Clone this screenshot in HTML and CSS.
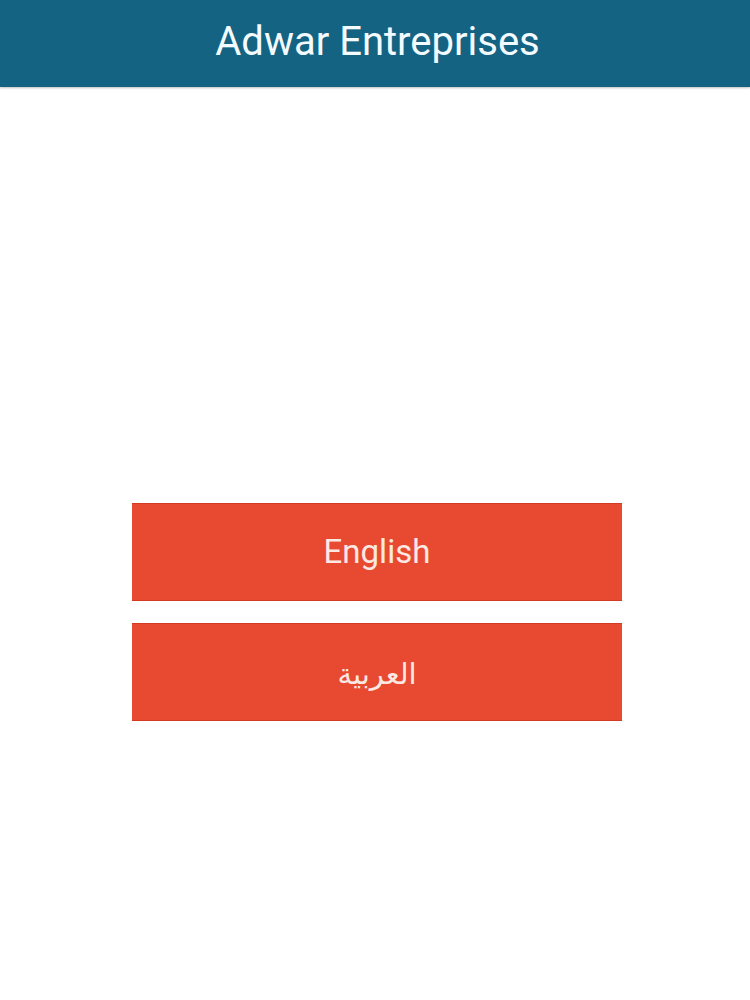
FILE: index.html
```html
<!DOCTYPE html>
<html lang="en">
<head>
<meta charset="utf-8">
<title>Adwar Entreprises</title>
<link rel="stylesheet" href="styles.css">
</head>
<body>
<header class="topbar">
  <h1 class="title">Adwar Entreprises</h1>
</header>
<main class="content">
  <div class="langs">
    <button class="lang-btn" type="button">English</button>
    <button class="lang-btn lang-ar" type="button" lang="ar" dir="rtl">العربية</button>
  </div>
</main>
</body>
</html>
```
FILE: styles.css
```css
html, body {
  margin: 0;
  padding: 0;
  background: #ffffff;
  font-family: Roboto, "Noto Sans", sans-serif;
}
.topbar {
  height: 87px;
  background: #156383;
  display: flex;
  align-items: center;
  justify-content: center;
  padding-left: 5px;
  box-sizing: border-box;
  box-shadow: 0 1px 2px rgba(0,0,0,0.25);
}
.title {
  margin: 0;
  color: #f4fbff;
  font-family: Roboto, sans-serif;
  font-weight: 400;
  font-size: 40px;
  line-height: 1;
  padding-bottom: 4px;
}
.content {
  display: flex;
  justify-content: center;
  padding-top: 416px;
  padding-left: 4px;
}
.langs {
  width: 490px;
  display: flex;
  flex-direction: column;
  gap: 22px;
}
.lang-btn {
  height: 98px;
  margin: 0;
  border: 0;
  border-top: 1px solid #d33a22;
  border-bottom: 1px solid #d33a22;
  background: #e84a31;
  color: #fbe8e2;
  font-family: Roboto, sans-serif;
  font-size: 33px;
  font-weight: 400;
  padding: 0 0 2px 0;
  display: flex;
  align-items: center;
  justify-content: center;
}
.lang-ar {
  font-family: "DejaVu Sans", sans-serif;
  font-size: 29px;
  padding: 4px 0 0 0;
}
```
